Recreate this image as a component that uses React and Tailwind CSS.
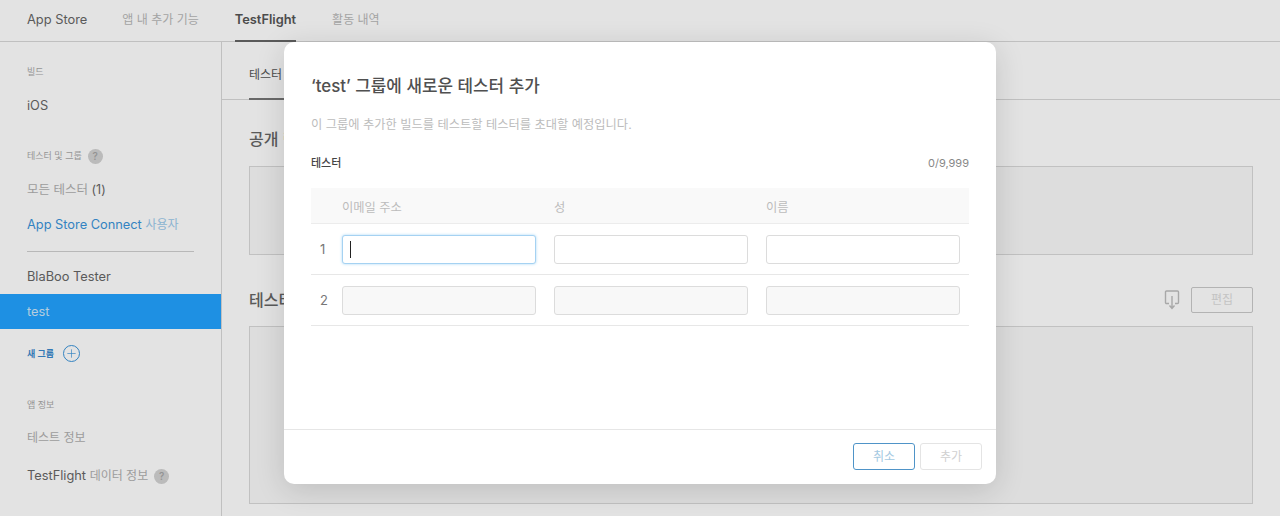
import { Plus } from "lucide-react";

const FONT = "font-['Inter','Noto_Sans_CJK_KR',sans-serif]";

const HelpDot = () => (
  <span className="flex h-[15px] w-[15px] items-center justify-center rounded-full bg-[#d2d2d2] text-[10px] font-medium text-[#a5a5a5]">
    ?
  </span>
);

const SectionLabel = ({ children, className = "" }) => (
  <div className={`text-[9px] leading-[12px] text-[#a8a8a8] ${className}`}>{children}</div>
);

const Sidebar = () => (
  <aside className="w-[222px] shrink-0 border-r border-[#d8d8d8] pt-[24px] text-[12.8px]">
    <div className="px-[27px]">
      <SectionLabel>빌드</SectionLabel>
      <div className="mt-[18px] leading-[20px] text-[#666]">iOS</div>
      <div className="mt-[32px] flex h-[16px] items-center gap-[6px]">
        <SectionLabel>테스터 및 그룹</SectionLabel>
        <HelpDot />
      </div>
      <div className="mt-[16px] text-[12.5px] leading-[20px] text-[#666]">
        <span className="text-[#b0b0b0]">모든 테스터</span> (1)
      </div>
      <div className="mt-[15px] whitespace-nowrap leading-[20px] text-[#3a94da]">
        App Store Connect <span className="text-[12px] text-[#9ccaec]">사용자</span>
      </div>
      <div className="mt-[16px] h-px w-[167px] bg-[#cfcfcf]" />
      <div className="mt-[15px] leading-[20px] text-[#666]">BlaBoo Tester</div>
    </div>
    <div className="mt-[7px] flex h-[35px] items-center bg-[#22a2ff] px-[27px] text-[#cbe6fa]">test</div>
    <div className="mt-[16px] flex h-[17px] items-center gap-[9px] px-[27px]">
      <span className="text-[9px] font-semibold text-[#3a88cc]">새 그룹</span>
      <span className="flex h-[17px] w-[17px] items-center justify-center rounded-full border border-[#3a94da] text-[#3a94da]">
        <Plus size={13} strokeWidth={1.25} />
      </span>
    </div>
    <div className="px-[27px]">
      <SectionLabel className="mt-[37px]">앱 정보</SectionLabel>
      <div className="mt-[17px] text-[12px] leading-[20px] text-[#b0b0b0]">테스트 정보</div>
      <div className="mt-[18px] flex items-center gap-[6px] leading-[20px] text-[#666]">
        <span>
          TestFlight <span className="text-[12px] text-[#b0b0b0]">데이터 정보</span>
        </span>
        <HelpDot />
      </div>
    </div>
  </aside>
);

const Main = () => (
  <main className="flex-1 px-[27px]">
    <div className="-mx-[27px] h-[58px] border-b border-[#d8d8d8] px-[27px]">
      <div className="flex h-[58px] w-[60px] items-center border-b-2 border-[#777] pt-[9px] text-[12px] text-[#555]">
        테스터
      </div>
    </div>
    <h2 className="mt-[26px] text-[16px] font-medium leading-[26px] text-[#666]">공개 링크</h2>
    <div className="mt-[14px] h-[89px] border border-[#d9d9d9] bg-[#f9f9f9]" />
    <div className="mt-[32px] flex h-[26px] items-center justify-between">
      <h2 className="text-[16px] font-medium text-[#666]">테스터</h2>
      <div className="flex items-center gap-[11px]">
        <svg width="16" height="22" viewBox="0 0 16 22" fill="none" stroke="#bdbdbd" strokeWidth="1.4">
          <path d="M5 14.5H2.5a1 1 0 0 1-1-1V3a1 1 0 0 1 1-1h11a1 1 0 0 1 1 1v10.5a1 1 0 0 1-1 1H11" />
          <path d="M8 7v12M5.5 16.5 8 19.5l2.5-3" />
        </svg>
        <button className="h-[26px] w-[62px] rounded-[2px] border border-[#c9c9c9] text-[12px] text-[#dcdcdc]">
          편집
        </button>
      </div>
    </div>
    <div className="mt-[13px] h-[178px] border border-[#d9d9d9] bg-[#f9f9f9]" />
  </main>
);

const Field = ({ disabled, focused }) => (
  <div className="relative">
    <input
      readOnly
      className={`block h-[29px] w-[194px] rounded-[3px] border outline-none ${
        focused
          ? "border-[#a5d2f2] shadow-[0_0_3px_#a9d7f5]"
          : "border-[#dcdcdc]"
      } ${disabled ? "bg-[#f8f8f8]" : "bg-white"}`}
    />
    {focused && <span className="absolute left-[8px] top-[6px] h-[17px] w-px bg-[#222]" />}
  </div>
);

const Row = ({ n, disabled, focused }) => (
  <div className="flex h-[51px] items-center gap-[18px] border-b border-[#e7e7e7] pr-[9px]">
    <span className="-mr-[5px] w-[18px] pl-[9px] pt-[2px] text-[13px] text-[#777]">{n}</span>
    <Field disabled={disabled} focused={focused} />
    <Field disabled={disabled} />
    <Field disabled={disabled} />
  </div>
);

const Modal = () => (
  <div className="absolute left-[284px] top-[42px] flex h-[442px] w-[712px] flex-col rounded-[10px] bg-white shadow-[0_6px_30px_rgba(0,0,0,0.14)]">
    <div className="flex-1 px-[27px]">
      <h1 className="mt-[31px] text-[16.9px] font-medium leading-[26px] text-[#505050]">
        ‘test’ 그룹에 새로운 테스터 추가
      </h1>
      <p className="mt-[17px] text-[12.25px] leading-[18px] text-[#bcbcbc]">
        이 그룹에 추가한 빌드를 테스트할 테스터를 초대할 예정입니다.
      </p>
      <div className="mt-[21px] flex h-[16px] items-center justify-between">
        <span className="text-[11px] font-medium text-[#444]">테스터</span>
        <span className="text-[11px] text-[#888]">0/9,999</span>
      </div>
      <div className="mt-[17px] flex h-[36px] items-center gap-[18px] border-b border-[#ececec] bg-[#f9f9f9] pl-[31px] pt-[5px] text-[12.25px] text-[#bcbcbc]">
        <span className="w-[194px]">이메일 주소</span>
        <span className="w-[194px]">성</span>
        <span className="w-[194px]">이름</span>
      </div>
      <Row n="1" focused />
      <Row n="2" disabled />
    </div>
    <div className="flex h-[55px] items-start justify-end gap-[5px] border-t border-[#e6e6e6] pr-[14px] pt-[13px] text-[12px]">
      <button className="h-[27px] w-[62px] rounded-[3px] border border-[#4f94c8] text-[#a5c9e2]">취소</button>
      <button className="h-[27px] w-[62px] rounded-[3px] border border-[#e4e4e4] text-[#d0d0d0]">추가</button>
    </div>
  </div>
);

export default function App() {
  return (
    <div className={`relative h-[516px] w-[1280px] overflow-hidden bg-white ${FONT}`}>
      <nav className="flex h-[42px] items-start gap-[36px] border-b border-[#d8d8d8] px-[27px] text-[12.85px]">
        <span className="-mr-px pt-[10px] leading-[20px] text-[#666]">App Store</span>
        <span className="pt-[10px] text-[12px] leading-[20px] text-[#b8b8b8]">앱 내 추가 기능</span>
        <span className="h-[42px] border-b-2 border-[#666] pt-[10px] font-semibold leading-[20px] text-[#555]">
          TestFlight
        </span>
        <span className="pt-[10px] text-[12px] leading-[20px] text-[#b8b8b8]">활동 내역</span>
      </nav>
      <div className="flex h-[474px]">
        <Sidebar />
        <Main />
      </div>
      {/* dim layer over the page */}
      <div className="absolute inset-0 bg-black/[0.11]" />
      <Modal />
    </div>
  );
}
